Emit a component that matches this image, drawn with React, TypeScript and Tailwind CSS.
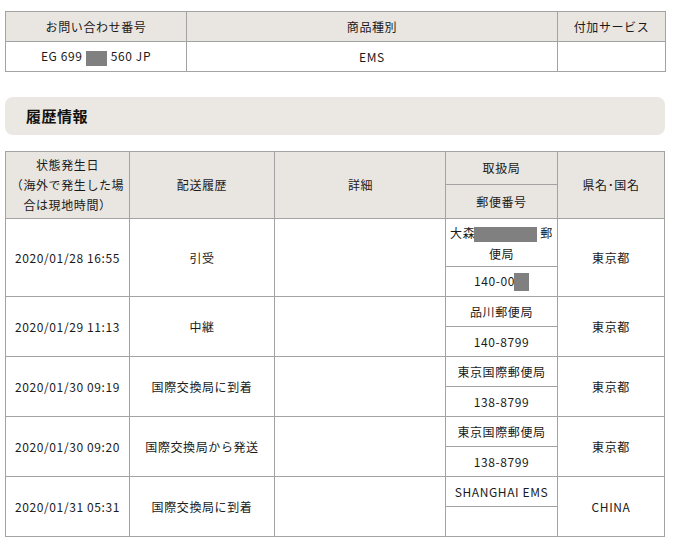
import React from "react";

const F = { fontFamily: '"Noto Sans CJK JP", "Noto Sans", sans-serif' };

function Box({ w, h, ml = 0, mr = 0 }: { w: number; h: number; ml?: number; mr?: number }) {
  return (
    <span
      className="inline-block bg-[#808080] align-middle"
      style={{ width: w, height: h, marginLeft: ml, marginRight: mr }}
    />
  );
}

const th = "border border-[#a3a3a3] bg-[#e9e5e0] font-normal text-center align-middle p-0";
const td = "border border-[#a3a3a3] bg-white text-center align-middle p-0";

type Row = { date: string; ev: string; office: React.ReactNode; zip: React.ReactNode; pref: string; top: number };

const rows: Row[] = [
  {
    date: "2020/01/28 16:55",
    ev: "引受",
    office: (
      <span className="leading-[21px]">
        大森<Box w={63} h={15} ml={-1} mr={3} />郵<br />便局
      </span>
    ),
    zip: (
      <span>
        140-00<Box w={15} h={18} ml={-1} />
      </span>
    ),
    pref: "東京都",
    top: 48,
  },
  { date: "2020/01/29 11:13", ev: "中継", office: "品川郵便局", zip: "140-8799", pref: "東京都", top: 30 },
  { date: "2020/01/30 09:19", ev: "国際交換局に到着", office: "東京国際郵便局", zip: "138-8799", pref: "東京都", top: 30 },
  { date: "2020/01/30 09:20", ev: "国際交換局から発送", office: "東京国際郵便局", zip: "138-8799", pref: "東京都", top: 30 },
  { date: "2020/01/31 05:31", ev: "国際交換局に到着", office: "SHANGHAI EMS", zip: "", pref: "CHINA", top: 30 },
];

export default function App() {
  return (
    <div className="bg-white w-[675px] h-[546px] overflow-hidden pl-[5px] pt-[11px] text-[12px] tracking-[0.6px] text-[#1a1a1a]" style={F}>
      <table className="border-collapse table-fixed w-[660px]">
        <colgroup>
          <col style={{ width: 181 }} />
          <col style={{ width: 371 }} />
          <col style={{ width: 108 }} />
        </colgroup>
        <tbody>
          <tr className="h-[30px]">
            <th className={th}>お問い合わせ番号</th>
            <th className={th}>商品種別</th>
            <th className={th}>付加サービス</th>
          </tr>
          <tr className="h-[30px]">
            <td className={td}>
              EG 699 <Box w={21} h={15} ml={0} mr={4} />560 JP
            </td>
            <td className={td}>EMS</td>
            <td className={td}></td>
          </tr>
        </tbody>
      </table>

      <div className="mt-[25px] w-[660px] h-[38px] rounded-[8px] bg-[#ebe7e2] flex items-center pl-[21px]">
        <span className="text-[15px] font-bold text-[#111] tracking-[0.5px]">履歴情報</span>
      </div>

      <table className="mt-[16px] border-collapse table-fixed w-[659px]">
        <colgroup>
          <col style={{ width: 124 }} />
          <col style={{ width: 145 }} />
          <col style={{ width: 171 }} />
          <col style={{ width: 112 }} />
          <col style={{ width: 107 }} />
        </colgroup>
        <tbody>
          <tr className="h-[33px]">
            <th className={th + " leading-[20px]"} rowSpan={2}>
              状態発生日
              <br />（海外で発生した場
              <br />合は現地時間）
            </th>
            <th className={th} rowSpan={2}>配送履歴</th>
            <th className={th + " text-left pl-[73px]"} rowSpan={2}>詳細</th>
            <th className={th}>取扱局</th>
            <th className={th} rowSpan={2}>県名･国名</th>
          </tr>
          <tr className="h-[34px]">
            <th className={th}>郵便番号</th>
          </tr>
          {rows.map((r, i) => (
            <React.Fragment key={i}>
              <tr style={{ height: r.top }}>
                <td className={td} rowSpan={2}>{r.date}</td>
                <td className={td} rowSpan={2}>{r.ev}</td>
                <td className={td} rowSpan={2}></td>
                <td className={td}>{r.office}</td>
                <td className={td} rowSpan={2}>{r.pref}</td>
              </tr>
              <tr className="h-[30px]">
                <td className={td}>{r.zip}</td>
              </tr>
            </React.Fragment>
          ))}
        </tbody>
      </table>
    </div>
  );
}
